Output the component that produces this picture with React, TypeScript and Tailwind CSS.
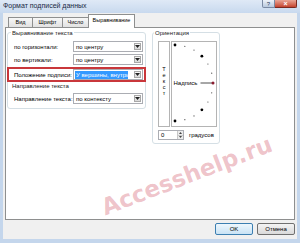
import React from "react";

function Arrow() {
  return (
    <svg width="5" height="3" viewBox="0 0 5 3">
      <path d="M0 0 L5 0 L2.5 3 Z" fill="#222" />
    </svg>
  );
}

function Combo({ text, selected = false }: { text: string; selected?: boolean }) {
  return (
    <div className="flex h-[11px] w-[70px] items-stretch border border-[#abadb3] bg-white">
      <div className="flex flex-1 items-center overflow-hidden whitespace-nowrap pl-[1px] text-[6px] leading-none">
        {selected ? (
          <span className="flex h-[8px] w-[53px] items-center overflow-hidden bg-[#3399ff] pl-[1px] text-white">{text}</span>
        ) : (
          <span className="pl-[1px]">{text}</span>
        )}
      </div>
      <div className="m-[1px] flex w-[7px] items-center justify-center border border-[#a8a8a8] bg-linear-to-b from-[#f6f6f6] to-[#d8d8d8]">
        <Arrow />
      </div>
    </div>
  );
}

function Orientation() {
  const cx = 3;
  const cy = 41;
  const r = 38;
  const angles = [90, 75, 60, 45, 30, 15, 0, -15, -30, -45, -60, -75, -90];
  return (
    <svg width="44" height="84" viewBox="0 0 44 84">
      {angles.map((a) => {
        const rad = (a * Math.PI) / 180;
        const x = cx + r * Math.cos(rad);
        const y = cy - r * Math.sin(rad);
        const big = a % 45 === 0;
        if (a === 0) return null;
        return <circle key={a} cx={x} cy={y} r={big ? 1.4 : 0.6} fill={big ? "#000" : "#444"} />;
      })}
      <text x="1.5" y="43.2" fontSize="6" fontFamily="Liberation Sans, sans-serif" fill="#000">
        Надпись
      </text>
      <line x1="28.5" y1="41" x2="40" y2="41" stroke="#222" strokeWidth="0.8" />
      <circle cx="41" cy="41" r="1.5" fill="#8a1c30" />
    </svg>
  );
}

export default function App() {
  return (
    <div className="relative flex h-[243px] w-[300px] flex-col overflow-hidden bg-[#c4d6ec] font-['Liberation_Sans',sans-serif] text-black">
      {/* Title bar */}
      <div className="flex h-[13px] items-start bg-linear-to-b from-[#dfe9f6] to-[#c8d9ee]">
        <div className="whitespace-nowrap pl-[3px] pt-[2px] text-[7px] leading-[7px] text-[#1a2a44]">Формат подписей данных</div>
        <div className="ml-auto mr-[3px] flex">
          <div className="flex h-[8px] w-[13px] items-center justify-center rounded-bl-[2px] border border-t-0 border-[#7a8aa3] bg-linear-to-b from-[#eef3f9] to-[#b9c9de] text-[6px] leading-none text-[#2a3d5a]">
            ?
          </div>
          <div className="flex h-[8px] w-[22px] items-center justify-center rounded-br-[2px] border border-l-0 border-t-0 border-[#7a2a20] bg-linear-to-b from-[#e9a596] to-[#c4432e] text-[7px] font-bold leading-none text-white">
            ×
          </div>
        </div>
      </div>

      {/* Client area */}
      <div className="mx-[3px] mb-[4px] flex flex-1 flex-col bg-[#f0f0f0] px-[2px]">
        {/* Tabs */}
        <div className="relative z-10 flex h-[15px] items-end whitespace-nowrap pl-[3px] text-[5.5px] leading-none">
          <div className="mb-[1px] flex h-[10px] w-[25px] items-center justify-center border border-b-0 border-[#8e8f8f] bg-linear-to-b from-[#f7f7f7] to-[#e2e2e2]">
            Вид
          </div>
          <div className="-ml-[1px] mb-[1px] flex h-[10px] w-[31px] items-center justify-center border border-b-0 border-[#8e8f8f] bg-linear-to-b from-[#f7f7f7] to-[#e2e2e2]">
            Шрифт
          </div>
          <div className="-ml-[1px] mb-[1px] flex h-[10px] w-[27px] items-center justify-center border border-b-0 border-[#8e8f8f] bg-linear-to-b from-[#f7f7f7] to-[#e2e2e2]">
            Число
          </div>
          <div className="-ml-[1px] flex h-[14px] w-[47px] items-center justify-center border border-b-0 border-[#8e8f8f] bg-white pb-[2px]">
            Выравнивание
          </div>
        </div>

        {/* Panel */}
        <div className="-mt-[1px] flex h-[193px] items-start gap-[6px] whitespace-nowrap border border-[#8e8f8f] bg-white pl-[1px] pt-[4px] text-[6px] leading-none">
          {/* Left group */}
          <div className="relative flex h-[77px] w-[139px] flex-col rounded-[3px] border border-[#d5dfe5] pt-[8px]">
            <div className="absolute -top-[4px] left-[3px] flex h-[7px] items-center bg-white px-[1px] text-[#1a1a1a]">
              Выравнивание текста
            </div>
            <div className="flex h-[11px] items-center">
              <div className="w-[65px] pl-[6px]">по горизонтали:</div>
              <Combo text="по центру" />
            </div>
            <div className="mt-[2px] flex h-[11px] items-center">
              <div className="w-[65px] pl-[6px]">по вертикали:</div>
              <Combo text="по центру" />
            </div>
            <div className="-mx-[1px] mt-[2px] flex h-[15px] items-center border-2 border-[#c9373b]">
              <div className="w-[64px] pl-[5px]">Положение подписи:</div>
              <Combo text="У вершины, внутри" selected />
            </div>
            <div className="flex h-[8px] items-center pl-[4px] text-[#1a1a1a]">Направление текста</div>
            <div className="mt-[3px] flex h-[11px] items-center">
              <div className="w-[65px] pl-[6px]">Направление текста:</div>
              <Combo text="по контексту" />
            </div>
          </div>

          {/* Orientation group */}
          <div className="relative flex h-[112px] w-[68px] flex-col rounded-[3px] border border-[#d5dfe5] pl-[5px] pt-[8px]">
            <div className="absolute -top-[4px] left-[1px] flex h-[7px] items-center bg-white px-[1px] text-[#1a1a1a]">
              Ориентация
            </div>
            <div className="flex h-[86px] gap-[1px]">
              <div className="flex w-[12px] flex-col items-center justify-center border border-[#b4b4b4] pb-[6px] text-[5.5px] leading-[6px]">
                <span>Т</span>
                <span>е</span>
                <span>к</span>
                <span>с</span>
                <span>т</span>
              </div>
              <div className="w-[46px] border border-[#b4b4b4]">
                <Orientation />
              </div>
            </div>
            <div className="mt-[3px] flex h-[10px] items-center">
              <div className="flex h-[10px] w-[26px] items-stretch border border-[#abadb3] bg-white">
                <div className="flex flex-1 items-center pl-[2px]">0</div>
                <div className="flex w-[6px] flex-col border-l border-[#c8c8c8] bg-[#ececec]">
                  <div className="flex flex-1 items-center justify-center border-b border-[#c8c8c8]">
                    <svg width="3" height="2" viewBox="0 0 3 2">
                      <path d="M0 2 L3 2 L1.5 0 Z" fill="#444" />
                    </svg>
                  </div>
                  <div className="flex flex-1 items-center justify-center">
                    <svg width="3" height="2" viewBox="0 0 3 2">
                      <path d="M0 0 L3 0 L1.5 2 Z" fill="#444" />
                    </svg>
                  </div>
                </div>
              </div>
              <div className="ml-[5px]">градусов</div>
            </div>
          </div>
        </div>

        {/* Buttons */}
        <div className="mt-[3px] flex h-[12px] justify-end gap-[4px] text-[6px] leading-none">
          <div className="flex w-[38px] items-center justify-center rounded-[2px] border border-[#3c7fb1] bg-linear-to-b from-[#eef7fd] to-[#c9e3f5]">
            OK
          </div>
          <div className="flex w-[38px] items-center justify-center rounded-[2px] border border-[#707070] bg-linear-to-b from-[#f4f4f4] to-[#dadada]">
            Отмена
          </div>
        </div>
      </div>

      {/* Watermark */}
      <div className="pointer-events-none absolute left-[187px] top-[176px] -translate-x-1/2 -translate-y-1/2 -rotate-[21deg] whitespace-nowrap font-['DejaVu_Sans',sans-serif] text-[23px] font-bold leading-none text-[rgba(205,70,90,0.32)]">
        Accesshelp.ru
      </div>
    </div>
  );
}
